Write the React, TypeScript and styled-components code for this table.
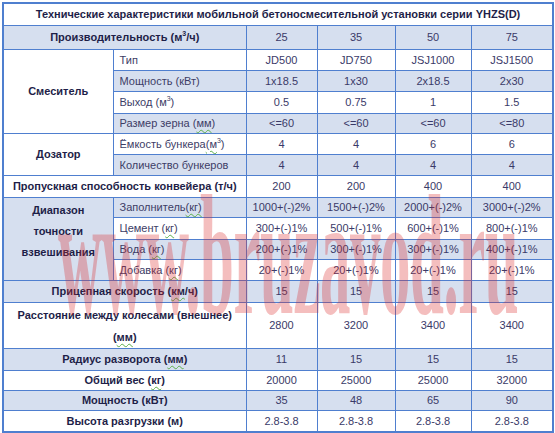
import styled, { createGlobalStyle } from 'styled-components';

const GlobalStyle = createGlobalStyle`
  html, body {
    margin: 0;
    padding: 0;
    background: #ffffff;
  }
  body {
    font-family: "Liberation Sans", Arial, sans-serif;
  }
`

const Wrap = styled.div`
  position: relative;
  padding: 2px;
  width: 551px;
`

const Table = styled.table`
  border-collapse: collapse;
  table-layout: fixed;
  width: 550px;
  border: 2px solid #4f7fcf;
  font-size: 11px;
  color: #3a3a68;
`

const Row = styled.tr<{ $shade?: boolean; $h?: number }>`
  height: ${p => p.$h || 21}px;
  & > td {
    background: ${p => (p.$shade ? '#d6dfef' : '#ffffff')};
  }
`

const Cell = styled.td`
  border: 1px solid #4f7fcf;
  padding: 0 6px;
  line-height: 16px;
  vertical-align: middle;
  white-space: nowrap;
`

const TitleCell = styled(Cell)`
  text-align: center;
  font-weight: bold;
  color: #1e1e48;
`

const GroupCell = styled(Cell)<{ $shade?: boolean }>`
  text-align: center;
  font-weight: bold;
  color: #1e1e48;
  padding: 0 2px;
  && {
    background: ${p => (p.$shade ? '#d6dfef' : '#ffffff')};
  }
`

const TallGroup = styled(GroupCell)<{ $lh: number; $pt?: number }>`
  line-height: ${p => p.$lh}px;
  vertical-align: top;
  && {
    padding-top: ${p => p.$pt || 0}px;
  }
`

const SubCell = styled(Cell)`
  text-align: left;
  color: #3d3d66;
`

const Value = styled(Cell)`
  text-align: center;
  padding: 0;
`

const Sup = styled.sup`
  font-size: 7px;
  line-height: 0;
  vertical-align: 5px;
`

const Spell = styled.span`
  text-decoration: underline wavy #5cae4a;
  text-decoration-thickness: 1px;
  text-underline-offset: 2px;
`

const Watermark = styled.div`
  position: absolute;
  left: 58px;
  top: 170px;
  font-family: "Liberation Serif", "Times New Roman", serif;
  font-weight: bold;
  font-size: 61px;
  line-height: 61px;
  color: rgba(218, 40, 40, 0.3);
  transform: scaleY(2.8);
  transform-origin: left top;
  white-space: nowrap;
  pointer-events: none;
  letter-spacing: -0.5px;
`

const values = (list: string[]) => list.map((v, i) => <Value key={i}>{v}</Value>)

export default function App() {
  return (
    <>
      <GlobalStyle />
      <Wrap>
        <Table>
          <colgroup>
            <col style={{ width: 110 }} />
            <col style={{ width: 133 }} />
            <col style={{ width: 71 }} />
            <col style={{ width: 78 }} />
            <col style={{ width: 76 }} />
            <col style={{ width: 82 }} />
          </colgroup>
          <tbody>
            <Row $h={22}>
              <TitleCell colSpan={6}>
                Технические характеристики мобильной бетоносмесительной установки серии YHZS(D)
              </TitleCell>
            </Row>
            <Row $shade $h={24}>
              <GroupCell colSpan={2} $shade>Производительность (м<Sup>3</Sup>/ч)</GroupCell>
              {values(['25', '35', '50', '75'])}
            </Row>
            <Row>
              <GroupCell rowSpan={4}>Смеситель</GroupCell>
              <SubCell>Тип</SubCell>
              {values(['JD500', 'JD750', 'JSJ1000', 'JSJ1500'])}
            </Row>
            <Row $shade>
              <SubCell>Мощность (кВт)</SubCell>
              {values(['1x18.5', '1x30', '2x18.5', '2x30'])}
            </Row>
            <Row $h={22}>
              <SubCell>Выход (м<Sup>3</Sup>)</SubCell>
              {values(['0.5', '0.75', '1', '1.5'])}
            </Row>
            <Row $shade $h={20}>
              <SubCell>Размер зерна (<Spell>мм</Spell>)</SubCell>
              {values(['<=60', '<=60', '<=60', '<=80'])}
            </Row>
            <Row>
              <GroupCell rowSpan={2}>Дозатор</GroupCell>
              <SubCell>Ёмкость бункера<Spell>(м</Spell><Sup>3</Sup>)</SubCell>
              {values(['4', '4', '6', '6'])}
            </Row>
            <Row $shade>
              <SubCell>Количество бункеров</SubCell>
              {values(['4', '4', '4', '4'])}
            </Row>
            <Row $h={22}>
              <GroupCell colSpan={2}>Пропускная способность конвейера (т/ч)</GroupCell>
              {values(['200', '200', '400', '400'])}
            </Row>
            <Row $shade $h={20}>
              <TallGroup rowSpan={4} $shade $lh={21} $pt={2}>Диапазон<br />точности<br />взвешивания</TallGroup>
              <SubCell>Заполнитель<Spell>(кг)</Spell></SubCell>
              {values(['1000+(-)2%', '1500+(-)2%', '2000+(-)2%', '3000+(-)2%'])}
            </Row>
            <Row $h={22}>
              <SubCell>Цемент (<Spell>кг</Spell>)</SubCell>
              {values(['300+(-)1%', '500+(-)1%', '600+(-)1%', '800+(-)1%'])}
            </Row>
            <Row $shade $h={20}>
              <SubCell>Вода (<Spell>кг</Spell>)</SubCell>
              {values(['200+(-)1%', '300+(-)1%', '300+(-)1%', '400+(-)1%'])}
            </Row>
            <Row>
              <SubCell>Добавка (<Spell>кг</Spell>)</SubCell>
              {values(['20+(-)1%', '20+(-)1%', '20+(-)1%', '20+(-)1%'])}
            </Row>
            <Row $shade $h={22}>
              <GroupCell colSpan={2} $shade>Прицепная скорость (<Spell>км</Spell>/ч)</GroupCell>
              {values(['15', '15', '15', '15'])}
            </Row>
            <Row $h={43}>
              <TallGroup colSpan={2} $lh={22} $pt={1}>Расстояние между колесами (внешнее)<br />(<Spell>мм</Spell>)</TallGroup>
              {values(['2800', '3200', '3400', '3400'])}
            </Row>
            <Row $shade $h={22}>
              <GroupCell colSpan={2} $shade>Радиус разворота (<Spell>мм</Spell>)</GroupCell>
              {values(['11', '15', '15', '15'])}
            </Row>
            <Row $h={20}>
              <GroupCell colSpan={2}>Общий вес (<Spell>кг</Spell>)</GroupCell>
              {values(['20000', '25000', '25000', '32000'])}
            </Row>
            <Row $shade $h={20}>
              <GroupCell colSpan={2} $shade>Мощность (кВт)</GroupCell>
              {values(['35', '48', '65', '90'])}
            </Row>
            <Row $h={22}>
              <GroupCell colSpan={2}>Высота разгрузки (м)</GroupCell>
              {values(['2.8-3.8', '2.8-3.8', '2.8-3.8', '2.8-3.8'])}
            </Row>
          </tbody>
        </Table>
        <Watermark>www.bruzavod.ru</Watermark>
      </Wrap>
    </>
  )
}
